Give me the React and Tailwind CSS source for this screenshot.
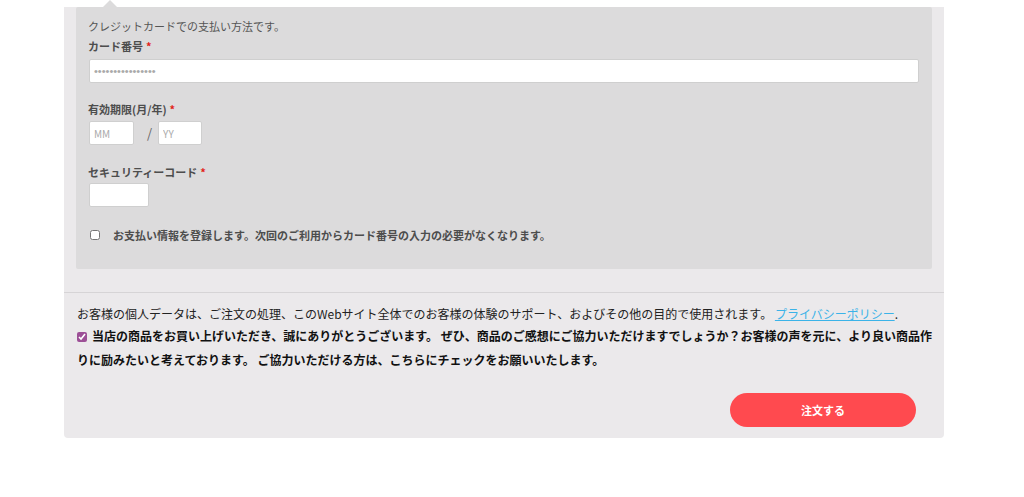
import React from "react";

const Required = () => <span className="text-[#e2231a] ml-[3px]">*</span>;

export default function App() {
  return (
    <div className="w-full h-[497px] bg-white font-['Noto_Sans_CJK_JP','Noto_Sans',sans-serif]">
      <div className="mx-[64px] w-[880px] bg-[#ebe9eb] rounded-b-[4px] pb-[11px]">
        {/* credit card box */}
        <div className="relative mx-[12px] mt-[7px] bg-[#dcdbdc] rounded-[2px] pl-[12px] pr-[13px] pt-[10px] pb-[26px]">
          <div className="absolute left-[27px] -top-[7px] w-0 h-0 border-l-[7px] border-r-[7px] border-b-[7px] border-l-transparent border-r-transparent border-b-[#dcdbdc]" />
          <p className="text-[11px] leading-[18px] text-[#555]">クレジットカードでの支払い方法です。</p>

          <label className="block mt-[3px] text-[11px] leading-[16px] font-bold text-[#4d4d4d]">
            カード番号<Required />
          </label>
          <input
            type="text"
            placeholder="••••••••••••••••"
            className="block mt-[5px] ml-[1px] w-[830px] h-[24px] bg-white border border-[#cfcfcf] rounded-[2px] px-[4px] font-['Liberation_Sans',sans-serif] text-[11px] placeholder:text-[#aaa] outline-none"
          />

          <label className="block mt-[18px] text-[11px] leading-[16px] font-bold text-[#4d4d4d]">
            有効期限(月/年)<Required />
          </label>
          <div className="flex items-center mt-[4px] ml-[1px]">
            <input
              type="text"
              placeholder="MM"
              className="w-[45px] h-[24px] bg-white border border-[#cfcfcf] rounded-[2px] px-[4px] text-[10px] placeholder:text-[#aaa] outline-none"
            />
            <span className="ml-[13px] mr-[6px] text-[13px] text-[#666]">/</span>
            <input
              type="text"
              placeholder="YY"
              className="w-[44px] h-[24px] bg-white border border-[#cfcfcf] rounded-[2px] px-[4px] text-[10px] placeholder:text-[#aaa] outline-none"
            />
          </div>

          <label className="block mt-[19px] text-[11px] leading-[16px] font-bold text-[#4d4d4d]">
            セキュリティーコード<Required />
          </label>
          <input
            type="text"
            className="block mt-[3px] ml-[1px] w-[60px] h-[24px] bg-white border border-[#cfcfcf] rounded-[2px] outline-none"
          />

          <div className="flex items-center mt-[20px] ml-[2px]">
            <input type="checkbox" className="w-[10px] h-[10px] m-0" />
            <span className="ml-[13px] text-[11px] leading-[16px] font-bold text-[#4d4d4d]">
              お支払い情報を登録します。次回のご利用からカード番号の入力の必要がなくなります。
            </span>
          </div>
        </div>

        {/* terms */}
        <div className="mt-[23px] border-t border-[#d6d4d6] pl-[13px] pr-[9px] pt-[11px]">
          <p className="text-[12px] leading-[20px] text-[#222]">
            お客様の個人データは、ご注文の処理、このWebサイト全体でのお客様の体験のサポート、およびその他の目的で使用されます。{" "}
            <a href="#" className="text-[#3bb3e8] underline">プライバシーポリシー</a>.
          </p>
          <p className="text-[12px] leading-[24px] font-bold text-[#111]">
            <input type="checkbox" defaultChecked className="w-[10px] h-[10px] m-0 mr-[5px] align-[-1px] accent-[#9c4f96]" />
            当店の商品をお買い上げいただき、誠にありがとうございます。 ぜひ、商品のご感想にご協力いただけますでしょうか？お客様の声を元に、より良い商品作りに励みたいと考えております。 ご協力いただける方は、こちらにチェックをお願いいたします。
          </p>
        </div>

        <div className="flex justify-end mt-[21px] pr-[28px]">
          <button className="w-[186px] h-[34px] rounded-full bg-[#ff4a4f] text-white text-[11px] font-bold">
            注文する
          </button>
        </div>
      </div>
    </div>
  );
}
